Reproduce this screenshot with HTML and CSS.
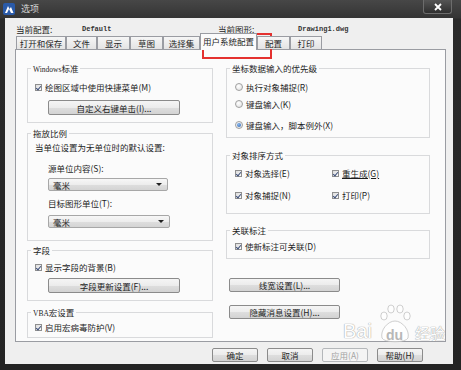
FILE: index.html
```html
<!DOCTYPE html>
<html lang="zh-CN">
<head>
<meta charset="utf-8">
<title>选项</title>
<link rel="stylesheet" href="styles.css">
</head>
<body>
<div class="window">
  <div class="titlebar">
    <svg class="app-icon" viewBox="0 0 12 12" width="12" height="12">
      <rect x="0" y="0" width="12" height="12" rx="2" fill="#2a5aa8"/>
      <path d="M2 10 L5 3 L6.5 6 L8 4 L10.5 10 Z" fill="#ffffff"/>
      <path d="M4 10 L6 6 L8 10 Z" fill="#2a5aa8"/>
    </svg>
    <span class="title">选项</span>
    <div class="close">
      <svg viewBox="0 0 8 8" width="8" height="8"><path d="M1 1 L7 7 M7 1 L1 7" stroke="#ffffff" stroke-width="1.8"/></svg>
    </div>
  </div>

  <div class="client">
    <div class="info">
      <span>当前配置:</span><span class="mono">Default</span>
      <span>当前图形:</span><span class="mono">Drawing1.dwg</span>
    </div>

    <div class="tabs">
      <div class="tab t1">打开和保存</div>
      <div class="tab t2">文件</div>
      <div class="tab t3">显示</div>
      <div class="tab t4">草图</div>
      <div class="tab t5">选择集</div>
      <div class="tab tab-active">用户系统配置</div>
      <div class="tab t7">配置</div>
      <div class="tab t8">打印</div>
    </div>

    <div class="panel">
      <div class="col">
        <fieldset class="group g1">
          <legend><span class="latin">Windows</span>标准</legend>
          <div class="row mt8"><span class="cb checked"></span><span>绘图区域中使用快捷菜单(M)</span></div>
          <div class="btn btn-left mt7">自定义右键单击(I)...</div>
        </fieldset>

        <fieldset class="group g2">
          <legend>拖放比例</legend>
          <div class="row mt3">当单位设置为无单位时的默认设置:</div>
          <div class="row indent mt9">源单位内容(S):</div>
          <div class="select s1"><span>毫米</span><span class="arrow"></span></div>
          <div class="row indent mt6">目标图形单位(T):</div>
          <div class="select s2"><span>毫米</span><span class="arrow"></span></div>
        </fieldset>

        <fieldset class="group g3">
          <legend>字段</legend>
          <div class="row mt6"><span class="cb checked"></span><span>显示字段的背景(B)</span></div>
          <div class="btn btn-left mt5">字段更新设置(F)...</div>
        </fieldset>

        <fieldset class="group g4">
          <legend><span class="latin">VBA</span>宏设置</legend>
          <div class="row mt4"><span class="cb checked"></span><span>启用宏病毒防护(V)</span></div>
        </fieldset>
      </div>

      <div class="col">
        <fieldset class="group r1">
          <legend>坐标数据输入的优先级</legend>
          <div class="row mt8"><span class="rb"></span><span>执行对象捕捉(R)</span></div>
          <div class="row mt5"><span class="rb"></span><span>键盘输入(K)</span></div>
          <div class="row mt9"><span class="rb on"></span><span>键盘输入，脚本例外(X)</span></div>
        </fieldset>

        <fieldset class="group r2">
          <legend>对象排序方式</legend>
          <div class="two-col">
            <div class="row"><span class="cb checked"></span><span>对象选择(E)</span></div>
            <div class="row"><span class="cb checked"></span><span class="ul">重生成(G)</span></div>
            <div class="row"><span class="cb checked"></span><span>对象捕捉(N)</span></div>
            <div class="row"><span class="cb checked"></span><span>打印(P)</span></div>
          </div>
        </fieldset>

        <fieldset class="group r3">
          <legend>关联标注</legend>
          <div class="row mt5"><span class="cb checked"></span><span>使新标注可关联(D)</span></div>
        </fieldset>

        <div class="btn btn-right b1">线宽设置(L)...</div>
        <div class="btn btn-right b2">隐藏消息设置(H)...</div>
      </div>
    </div>

    <div class="footer">
      <div class="btn fbtn">确定</div>
      <div class="btn fbtn">取消</div>
      <div class="btn fbtn disabled">应用(A)</div>
      <div class="btn fbtn">帮助(H)</div>
    </div>
  </div>

  <div class="highlight"></div>

  <div class="watermark">
    <svg class="paw" viewBox="0 0 34 40" width="34" height="40">
      <g fill="#ffffff" stroke="#bdbdbd" stroke-width="0.8">
        <ellipse cx="6" cy="12" rx="3.2" ry="4"/>
        <ellipse cx="13" cy="5" rx="3.2" ry="4"/>
        <ellipse cx="22" cy="5" rx="3.2" ry="4"/>
        <ellipse cx="29" cy="12" rx="3.2" ry="4"/>
        <path d="M4 34 C2 26 10 17 17 17 C24 17 32 26 30 34 C28 39 6 39 4 34 Z"/>
      </g>
    </svg>
    <span class="wm-bai">Bai</span><span class="wm-du">du</span><span class="wm-jy">经验</span>
  </div>
</div>
</body>
</html>
```
FILE: styles.css
```css
* { box-sizing: border-box; }
html, body { margin: 0; padding: 0; }
body {
  width: 461px;
  height: 370px;
  overflow: hidden;
  background: #262626;
  font-family: "Noto Sans CJK SC", "Liberation Sans", sans-serif;
  font-size: 8.5px;
  line-height: 12px;
  color: #1e1e1e;
}

.window {
  position: relative;
  width: 461px;
  height: 370px;
  display: flex;
  flex-direction: column;
  background: linear-gradient(#474747 0, #343434 18px, #2a2a2a 19px, #242424 100%);
}

/* title bar */
.titlebar {
  height: 18px;
  display: flex;
  align-items: center;
  padding-left: 3px;
}
.app-icon { display: block; }
.title {
  margin-left: 6px;
  color: #d6d6d6;
  font-size: 9px;
}
.close {
  margin-left: auto;
  margin-right: 9px;
  align-self: flex-start;
  width: 29px;
  height: 14px;
  border: 1px solid #6c6c6c;
  border-top: none;
  border-radius: 0 0 3px 3px;
  background: linear-gradient(#555555, #2f2f2f);
  display: flex;
  align-items: center;
  justify-content: center;
}

/* client area */
.client {
  margin: 0 8px 6px 5px;
  flex: 1;
  background: #efefef;
  display: flex;
  flex-direction: column;
}

.info {
  display: grid;
  grid-template-columns: 66px 136px 80px auto;
  align-items: center;
  height: 12px;
  margin: 5px 0 0 11px;
}
.mono {
  font-family: "Liberation Mono", monospace;
  font-size: 7px;
  font-weight: bold;
  color: #333;
}
.latin {
  font-family: "Liberation Serif", serif;
  font-size: 7.5px;
}

/* tabs */
.tabs {
  display: flex;
  align-items: flex-end;
  height: 14px;
  margin: 0 0 0 11px;
  position: relative;
  z-index: 2;
}
.tab {
  height: 13px;
  border: 1px solid #9a9ca2;
  border-bottom: none;
  background: linear-gradient(#f6f6f6, #e4e4e4);
  display: flex;
  align-items: center;
  justify-content: center;
  white-space: nowrap;
}
.t1 { width: 50px; }
.t2 { width: 31px; }
.t3 { width: 33px; }
.t4 { width: 33px; }
.t5 { width: 37px; }
.t7 { width: 33px; }
.t8 { width: 32px; }
.tab-active {
  width: 57px;
  height: 17px;
  margin-bottom: -1px;
  background: #fbfbfb;
  padding-bottom: 2px;
}

/* panel */
.panel {
  margin: 0 7px 0 10px;
  height: 293px;
  border: 1px solid #9a9ca2;
  background: #fbfbfb;
  display: grid;
  grid-template-columns: 186px 204px;
  column-gap: 13px;
  align-content: start;
  padding: 13px 0 0 11px;
}
.col {
  display: flex;
  flex-direction: column;
}

.group {
  margin: 0;
  padding: 0 4px 0 7px;
  border: 1px solid #d9dadc;
  min-width: 0;
}
.group legend {
  padding: 0 2px;
  margin-left: -4px;
  height: 10px;
  line-height: 10px;
}
.g1 { height: 60px; }
.g2 { height: 113px; margin-top: 5px; }
.g3 { height: 56px; margin-top: 4px; }
.g4 { height: 31px; margin-top: 6px; }
.r1 { height: 75px; }
.r2 { height: 64px; margin-top: 12px; }
.r3 { height: 34px; margin-top: 11px; }

.mt3 { margin-top: 3px; }
.mt4 { margin-top: 4px; }
.mt5 { margin-top: 5px; }
.mt6 { margin-top: 6px; }
.mt7 { margin-top: 7px; }
.mt8 { margin-top: 8px; }
.mt9 { margin-top: 9px; }

.row {
  display: flex;
  align-items: center;
  gap: 3px;
  height: 12px;
  white-space: nowrap;
}
.indent { margin-left: 13px; }
.r1 .row, .r2 .row, .r3 .row { margin-left: 1px; }

.two-col {
  display: grid;
  grid-template-columns: 97px auto;
  row-gap: 10px;
  margin-top: 7px;
}
.ul { text-decoration: underline; text-underline-offset: 1px; }

/* checkbox */
.cb {
  width: 7px;
  height: 7px;
  border: 1px solid #8f8f8f;
  background: linear-gradient(135deg, #dcdcdc, #fafafa);
  position: relative;
  flex: none;
}
.cb.checked::after {
  content: "";
  position: absolute;
  left: 1px;
  top: 0px;
  width: 2px;
  height: 4px;
  border: solid #3d4f7a;
  border-width: 0 1.3px 1.3px 0;
  transform: rotate(40deg);
}

/* radio */
.rb {
  width: 8px;
  height: 8px;
  border: 1px solid #a0a0a0;
  border-radius: 50%;
  background: radial-gradient(circle at 40% 35%, #ffffff, #dedede);
  display: flex;
  align-items: center;
  justify-content: center;
  flex: none;
}
.rb.on::after {
  content: "";
  width: 4px;
  height: 4px;
  border-radius: 50%;
  background: radial-gradient(circle at 40% 35%, #8ab8ea, #2b62b4);
}

/* select */
.select {
  display: flex;
  align-items: center;
  justify-content: space-between;
  height: 13px;
  margin-left: 13px;
  padding: 0 5px 0 4px;
  border: 1px solid #a7a7a7;
  border-radius: 2px;
  background: linear-gradient(#f7f7f7 0, #ededed 50%, #dedede 51%, #d4d4d4 100%);
}
.s1 { width: 120px; margin-top: 4px; }
.s2 { width: 122px; margin-top: 6px; }
.arrow {
  width: 0;
  height: 0;
  border-left: 3px solid transparent;
  border-right: 3px solid transparent;
  border-top: 3px solid #222;
}

/* buttons */
.btn {
  display: flex;
  align-items: center;
  justify-content: center;
  height: 15px;
  border: 1px solid #8b8b8b;
  border-radius: 2px;
  background: linear-gradient(#f5f5f5 0, #ececec 50%, #dedede 51%, #d3d3d3 100%);
  white-space: nowrap;
}
.btn-left { width: 132px; margin-left: 13px; }
.btn-right { width: 111px; margin-left: 3px; height: 14px; }
.b1 { margin-top: 19px; }
.b2 { margin-top: 13px; }

.footer {
  display: flex;
  justify-content: flex-end;
  gap: 9px;
  margin-top: 6px;
  padding-right: 30px;
}
.fbtn { width: 46px; height: 14px; }
.fbtn.disabled {
  color: #a3a3a3;
  border-color: #b4b7ba;
  background: #f4f4f4;
}

/* red annotation box */
.highlight {
  position: absolute;
  left: 202px;
  top: 33px;
  width: 70px;
  height: 26px;
  border: 2px solid #e4312f;
  pointer-events: none;
}

/* watermark */
.watermark {
  position: absolute;
  left: 343px;
  top: 296px;
  width: 110px;
  height: 50px;
  pointer-events: none;
  opacity: 0.9;
}
.paw {
  position: absolute;
  left: 35px;
  top: 8px;
}
.wm-bai, .wm-du, .wm-jy {
  position: absolute;
  color: #ffffff;
  font-family: "Liberation Sans", sans-serif;
  line-height: 20px;
}
.wm-bai {
  left: 0;
  top: 25px;
  font-size: 20px;
  text-shadow: 0 0 1px #9a9a9a, 0 0 1px #9a9a9a;
}
.wm-du {
  left: 43px;
  top: 29px;
  font-size: 14px;
  font-weight: bold;
  color: #b0b0b0;
}
.wm-jy {
  left: 72px;
  top: 27px;
  font-family: "Noto Sans CJK SC", sans-serif;
  font-size: 15px;
  text-shadow: 0 0 1px #9a9a9a, 0 0 1px #9a9a9a;
}
```
